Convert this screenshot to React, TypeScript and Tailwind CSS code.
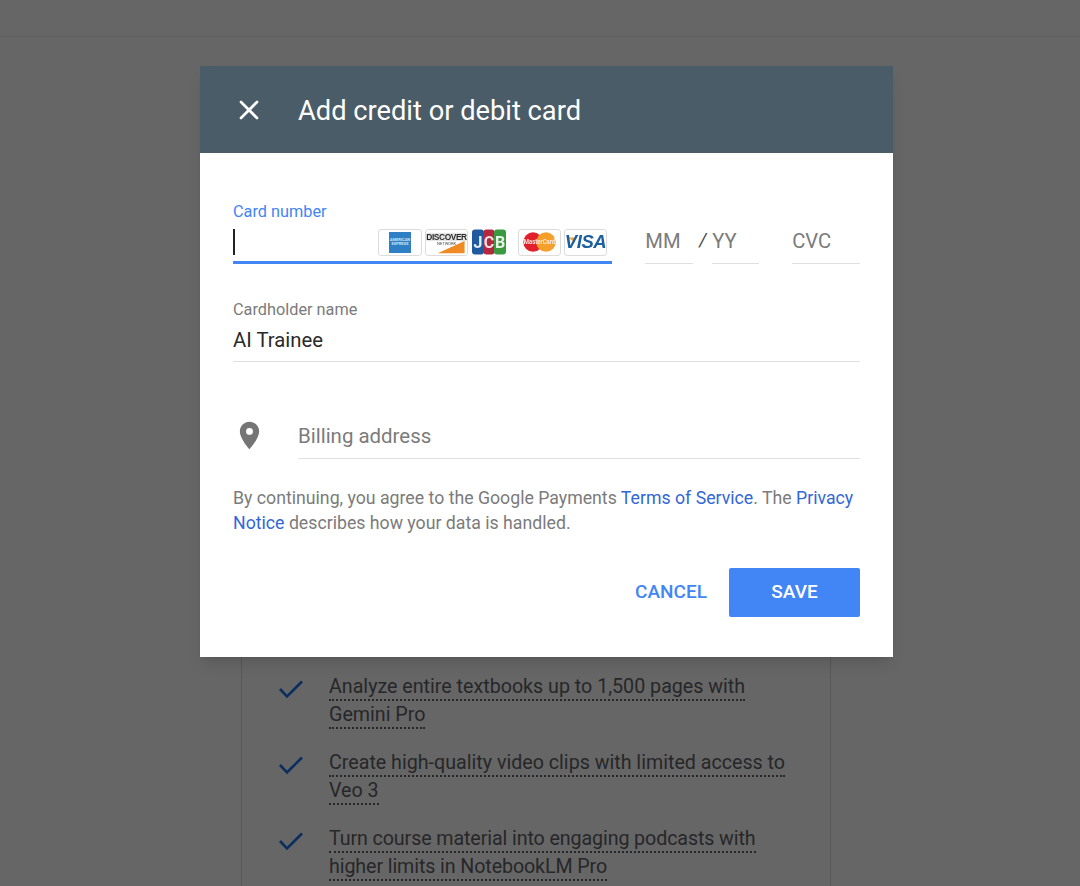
import React from "react";
import { X } from "lucide-react";

const benefits = [
  { lines: ["Analyze entire textbooks up to 1,500 pages with", "Gemini Pro"], tracking: "" },
  { lines: ["Create high-quality video clips with limited access to", "Veo 3"], tracking: "" },
  { lines: ["Turn course material into engaging podcasts with", "higher limits in NotebookLM Pro"], tracking: "tracking-[-0.1px]" },
];

const CardChip = ({ children, className = "" }: { children: React.ReactNode; className?: string }) => (
  <div className={`h-[27px] rounded-[3px] border border-[#dcdcdc] bg-white overflow-hidden shrink-0 ${className}`}>
    {children}
  </div>
);

const CardLogos = () => (
  <div className="flex items-center blur-[0.3px]">
    <CardChip className="w-[44px]">
      <div className="mx-auto mt-[2px] w-[22px] h-[21px] bg-[#2f7fc4] flex flex-col items-center justify-center text-[4px] leading-[4px] text-[#cfe4f5] font-bold">
        <span>AMERICAN</span>
        <span>EXPRESS</span>
      </div>
    </CardChip>
    <CardChip className="w-[43px] ml-[3px] relative">
      <svg viewBox="0 0 43 27" className="absolute inset-0 w-full h-full">
        <rect x="0" y="3" width="43" height="9" fill="#e4e4e4" />
        <path d="M12 25 L41 12 V25 Z" fill="#f08a24" />
      </svg>
      <div className="relative text-center text-[8.4px] leading-[10px] pt-[2px] font-bold text-[#2b2b2b] tracking-tighter font-['Liberation_Sans',sans-serif]">DISCOVER</div>
      <div className="relative text-center text-[4px] leading-[4px] text-[#444]">NETWORK</div>
    </CardChip>
    <svg viewBox="0 0 34 26" className="w-[34px] h-[26px] ml-[4px] shrink-0">
      <rect x="0" y="0.5" width="12" height="25" rx="3" fill="#1f5a9e" />
      <rect x="11.5" y="0.5" width="11" height="25" rx="3" fill="#b5263f" />
      <rect x="22" y="0.5" width="12" height="25" rx="3" fill="#3a9a3f" />
      <text x="6" y="19" fontSize="16" fontWeight="700" fill="#e8eef5" textAnchor="middle">J</text>
      <text x="17" y="19" fontSize="16" fontWeight="700" fill="#f3dde1" textAnchor="middle">C</text>
      <text x="28" y="19" fontSize="16" fontWeight="700" fill="#e6f3e6" textAnchor="middle">B</text>
    </svg>
    <CardChip className="w-[43px] ml-[12px]">
      <svg viewBox="0 0 43 27" className="w-full h-full">
        <circle cx="14.5" cy="13" r="10.5" fill="#e2202c" />
        <circle cx="28.5" cy="13" r="10.5" fill="#f6a02c" />
        <text x="4.5" y="15.5" fontSize="7" fontWeight="700" fill="#fbe9dc" textLength="34" lengthAdjust="spacingAndGlyphs">MasterCard</text>
      </svg>
    </CardChip>
    <CardChip className="w-[43px] ml-[3px] relative">
      <svg viewBox="0 0 43 27" className="absolute inset-0 w-full h-full">
        <path d="M3 8 H9 L10.5 14 Z" fill="#f0a32c" />
      </svg>
      <div className="relative h-full flex items-center justify-center text-[18.5px] font-bold italic text-[#1c5e9e] tracking-tight leading-none font-['Liberation_Sans',sans-serif]">
        VISA
      </div>
    </CardChip>
  </div>
);

export default function App() {
  return (
    <div className="relative h-[886px] w-[1080px] overflow-hidden bg-white font-['Roboto',sans-serif]">
      {/* page behind the dialog */}
      <div className="h-[37px] border-b border-[#e8eaed]" />
      <div className="ml-[241px] mt-[501px] w-[590px] h-[400px] border border-[#dadce0] pl-[35px] pt-[134px]">
        <ul className="space-y-[20px]">
          {benefits.map((b) => (
            <li key={b.lines[0]} className="flex">
              <svg viewBox="0 0 28 22" className="w-[28px] h-[22px] mt-[5px] shrink-0 fill-none stroke-[#1a73e8]">
                <polyline points="3,11 10,18.5 25,3.5" strokeWidth="2.6" />
              </svg>
              <div className={`ml-[24px] text-[19.67px] leading-[28px] text-[#5f6368] ${b.tracking}`}>
                {b.lines.map((line) => (
                  <div key={line}>
                    <span className="border-b-2 border-dotted border-[#5f6368] pb-[1px]">{line}</span>
                  </div>
                ))}
              </div>
            </li>
          ))}
        </ul>
      </div>

      {/* Overlay */}
      <div className="absolute inset-0 bg-black/60" />

      {/* Dialog */}
      <div className="absolute left-[200px] top-[66px] w-[693px] h-[591px] bg-white shadow-lg flex flex-col">
        <div className="h-[87px] bg-[#4a5c67] flex items-center pl-[33px] shrink-0">
          <X size={32} strokeWidth={2} className="text-white" />
          <span className="ml-[33px] mt-[3px] text-[27.25px] text-white">Add credit or debit card</span>
        </div>

        <div className="px-[33px] flex-1 flex flex-col">
          <div className="flex mt-[48px]">
            <div className="w-[380px] h-[63px] border-b-[3px] border-[#4285f4]">
              <div className="text-[16.3px] leading-[22px] text-[#4285f4]">Card number</div>
              <div className="flex items-center h-[38px]">
                <div className="w-[2px] h-[26px] bg-[#222]" />
                <div className="ml-[143px]">
                  <CardLogos />
                </div>
              </div>
            </div>
            <div className="ml-[33px] w-[48px] h-[63px] border-b border-[#e0e0e0] pt-[20px] text-[20.2px] leading-[40px] text-[#7b7b7b]">MM</div>
            <div className="w-[19px] text-[18px] leading-[38px] pt-[20px] text-[#444] text-center italic">/</div>
            <div className="w-[47px] h-[63px] border-b border-[#e0e0e0] pt-[20px] text-[20.2px] leading-[40px] text-[#7b7b7b]">YY</div>
            <div className="ml-[33px] w-[68px] h-[63px] border-b border-[#e0e0e0] pt-[20px] text-[20.2px] leading-[40px] text-[#7b7b7b]">CVC</div>
          </div>

          <div className="mt-[34px] h-[64px] border-b border-[#e0e0e0]">
            <div className="text-[16.3px] leading-[24px] text-[#7b7b7b]">Cardholder name</div>
            <div className="text-[20.3px] leading-[36px] text-[#2a2a2a]">AI Trainee</div>
          </div>

          <div className="flex mt-[56px]">
            <div className="w-[32px] h-[40px] flex items-start justify-center shrink-0">
              <svg viewBox="0 0 24 24" className="w-[33px] h-[33px] mt-[1px] shrink-0 fill-[#757575]">
                <path d="M12 2C8.13 2 5 5.13 5 9c0 5.25 7 13 7 13s7-7.75 7-13c0-3.87-3.13-7-7-7zm0 9.5a2.5 2.5 0 0 1 0-5 2.5 2.5 0 0 1 0 5z" />
              </svg>
            </div>
            <div className="ml-[33px] flex-1 h-[41px] border-b border-[#e0e0e0] text-[20.45px] leading-[36px] text-[#7b7b7b]">
              Billing address
            </div>
          </div>

          <div className="mt-[27px] text-[17.72px] leading-[25px] text-[#7b7b7b]">
            <div>
              By continuing, you agree to the Google Payments <a className="text-[#3367d6]">Terms of Service</a>. The <a className="text-[#3367d6]">Privacy</a>
            </div>
            <div>
              <a className="text-[#3367d6]">Notice</a> describes how your data is handled.
            </div>
          </div>

          <div className="mt-[32px] flex justify-end items-center">
            <button className="text-[19px] font-medium text-[#4285f4]">CANCEL</button>
            <button className="ml-[22px] w-[131px] h-[49px] rounded-[2px] bg-[#4285f4] text-white text-[19px] font-medium">SAVE</button>
          </div>
        </div>
      </div>
    </div>
  );
}
